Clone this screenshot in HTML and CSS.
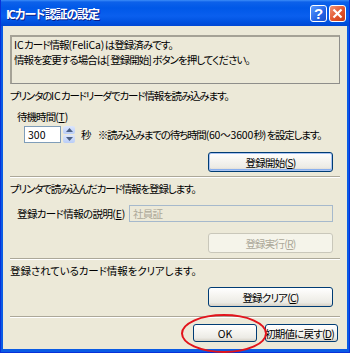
FILE: index.html
```html
<!DOCTYPE html>
<html lang="ja">
<head>
    <meta charset="UTF-8">
    <title>ICカード認証の設定</title>
    <link rel="stylesheet" href="styles.css">
</head>
<body>
    <div class="window">
        <div class="titlebar">
            <span class="title">ICカード認証の設定</span>
            <div class="caption-btns">
                <span class="cap help">?</span>
                <span class="cap close">
                    <svg width="11" height="11" viewBox="0 0 11 11"><path d="M1.5 1.5 L9.5 9.5 M9.5 1.5 L1.5 9.5" stroke="#fff" stroke-width="2.2" fill="none"/></svg>
                </span>
            </div>
        </div>

        <div class="client">
            <div class="notice">
                <span class="fit w-158"><span class="lat">IC</span>カード情報<span class="lat">(FeliCa)</span>は登録済みです。</span>
                <span class="fit w-235">情報を変更する場合は<span class="lat">[</span>登録開始<span class="lat">]</span>ボタンを押してください。</span>
            </div>

            <!-- 読み込み -->
            <p class="lead first fit w-218">プリンタの<span class="lat">IC</span>カードリーダでカード情報を読み込みます。</p>
            <p class="label fit w-51">待機時間<span class="lat">(<u>T</u>)</span></p>
            <div class="wait-row">
                <div class="field spin-field">300</div>
                <div class="spin">
                    <span class="spin-btn"><svg width="7" height="4" viewBox="0 0 7 4"><path d="M0 4 L3.5 0 L7 4 Z" fill="#4D6185"/></svg></span>
                    <span class="spin-btn"><svg width="7" height="4" viewBox="0 0 7 4"><path d="M0 0 L3.5 4 L7 0 Z" fill="#4D6185"/></svg></span>
                </div>
                <span class="unit">秒</span>
                <span class="hint fit w-223">※読み込みまでの待ち時間<span class="lat">(60～3600</span>秒<span class="lat">)</span>を設定します。</span>
            </div>
            <div class="btn-row row-start">
                <button class="btn wide is-default">登録開始(<u>S</u>)</button>
            </div>
            <hr class="sep sep-1">

            <!-- 登録 -->
            <p class="lead fit w-185">プリンタで読み込んだカード情報を登録します。</p>
            <div class="desc-row">
                <span class="fit w-108">登録カード情報の説明<span class="lat">(<u>E</u>)</span></span>
                <div class="field desc-field disabled">社員証</div>
            </div>
            <div class="btn-row row-exec">
                <button class="btn wide" disabled>登録実行(<u>R</u>)</button>
            </div>
            <hr class="sep sep-2">

            <!-- クリア -->
            <p class="lead fit w-185">登録されているカード情報をクリアします。</p>
            <div class="btn-row row-clear">
                <button class="btn wide">登録クリア(<u>C</u>)</button>
            </div>
            <hr class="sep sep-3">

            <div class="footer">
                <button class="btn ok">OK</button>
                <button class="btn reset">初期値に戻す(<u>D</u>)</button>
            </div>
        </div>

        <div class="mark"></div>
    </div>
</body>
</html>
```

FILE: styles.css
```css
body {
    margin: 0;
    padding: 0;
    background: #fff;
    font-family: "Noto Sans CJK JP", "Noto Sans", sans-serif;
    font-size: 10.5px;
    letter-spacing: -0.8px;
    font-feature-settings: "palt";
    color: #000;
}

/* lines stretched to the width measured on the dialog */
.fit {
    display: block;
    flex: none;
    white-space: nowrap;
    letter-spacing: -1.6px;
    line-height: 13px;
    text-align: justify;
    text-align-last: justify;
}

/* latin runs keep their own spacing */
.lat {
    display: inline-block;
    letter-spacing: -0.2px;
}

.w-51 { width: 51px; }
.w-108 { width: 108px; }
.w-158 { width: 158px; }
.w-185 { width: 185px; }
.w-218 { width: 218px; }
.w-223 { width: 223px; }
.w-235 { width: 235px; }

.window {
    position: relative;
    width: 350px;
    height: 353px;
    box-sizing: border-box;
    display: flex;
    flex-direction: column;
    background: #0A5BE4;
    border-left: 1px solid #0831D9;
    border-right: 1px solid #0831D9;
    border-bottom: 1px solid #0831D9;
}

.titlebar {
    height: 26px;
    flex: none;
    display: flex;
    align-items: center;
    justify-content: space-between;
    padding: 0 3px 0 5px;
    background: linear-gradient(to bottom, #3C8DF8 0, #0D61EA 2px, #0058E8 8px, #0A5FEE 16px, #0052E0 22px, #0048D4 26px);
}

.title {
    width: 92px;
    color: #fff;
    font-weight: bold;
    font-size: 12px;
    white-space: nowrap;
    letter-spacing: -2px;
    text-align: justify;
    text-align-last: justify;
    text-shadow: 1px 1px 0 #0A1E8A;
}

.caption-btns {
    display: flex;
    gap: 2px;
}

.cap {
    width: 15px;
    height: 15px;
    border: 1px solid #fff;
    border-radius: 3px;
    display: flex;
    align-items: center;
    justify-content: center;
    color: #fff;
    font-family: "Liberation Sans", sans-serif;
    font-weight: bold;
    font-size: 15px;
    letter-spacing: 0;
}

.help {
    background: linear-gradient(135deg, #5B9BFF, #2464E6 60%, #1B50C8);
}

.close {
    background: linear-gradient(135deg, #F19477, #E2542C 55%, #C63C16);
}

.client {
    flex: 1;
    margin: 0 2px 3px 2px;
    background: #ECE9D8;
    padding: 0 14px 0 7px;
    display: flex;
    flex-direction: column;
    line-height: 13px;
}

.notice {
    margin-top: 9px;
    margin-right: -7px;
    height: 46px;
    padding: 0 0 0 2px;
    border: 1px solid #8E8E8A;
    border-top: 2px solid #A5A296;
    border-left: 2px solid #A5A296;
    background: #ECE9D8;
}

.notice .fit {
    line-height: 15px;
}

.lead {
    margin: 4px 0 0;
}

.lead.first {
    margin-top: 5px;
}

.label {
    margin: 8px 0 0 7px;
}

u {
    text-decoration: underline;
}

.wait-row {
    display: flex;
    align-items: center;
    margin: 3px 0 0 14px;
}

.field {
    flex: none;
    height: 15px;
    border: 1px solid #7F9DB9;
    background: #fff;
    padding: 0 3px;
    line-height: 15px;
}

.spin-field {
    width: 29px;
    letter-spacing: 0;
}

.spin {
    flex: none;
    display: flex;
    flex-direction: column;
    margin-left: 2px;
    height: 17px;
    width: 12px;
    gap: 1px;
}

.spin-btn {
    flex: 1;
    display: flex;
    align-items: center;
    justify-content: center;
    border-radius: 2px;
    background: linear-gradient(to bottom, #DCE6FD, #B9CDF7);
}

.unit {
    margin-left: 6px;
}

.hint {
    margin-left: 7px;
}

.btn-row {
    display: flex;
    justify-content: flex-end;
}

.row-start {
    margin-top: 9px;
}

.row-exec {
    margin-top: 11px;
}

.row-clear {
    margin-top: 10px;
}

.btn {
    height: 20px;
    padding: 0;
    font-family: inherit;
    font-size: 10.5px;
    letter-spacing: -0.8px;
    font-feature-settings: "palt";
    color: #000;
    border: 1px solid #003C74;
    border-radius: 3px;
    background: linear-gradient(to bottom, #FFFFFF 0, #F6F5F1 40%, #ECEBE5 80%, #D6D0C5 100%);
    white-space: nowrap;
}

.btn.wide {
    width: 125px;
}

.btn.is-default {
    box-shadow: inset 0 0 0 1px #A9C3F2, inset 0 -1px 0 1px #8AB0EE;
}

.btn:disabled {
    color: #ACA899;
    border-color: #C9C7BA;
    background: #F5F4EA;
}

.sep {
    height: 0;
    margin: 4px -7px 0 0;
    border: none;
    border-top: 1px solid #ACA899;
    border-bottom: 1px solid #fff;
}

.sep-2 {
    margin-top: 5px;
}

.sep-3 {
    margin-top: 9px;
}

.desc-row {
    display: flex;
    align-items: center;
    justify-content: space-between;
    margin: 10px 0 0 7px;
}

.desc-field {
    width: 196px;
}

.desc-field.disabled {
    background: #ECE9D8;
    color: #ACA899;
    border-color: #A6B9CC;
}

.footer {
    display: flex;
    justify-content: flex-end;
    gap: 8px;
    margin: 6px -5px 0 0;
}

.btn.ok {
    width: 64px;
    height: 18px;
    letter-spacing: 0;
}

.btn.reset {
    width: 73px;
    height: 18px;
    overflow: visible;
    text-indent: -4px;
}

.mark {
    position: absolute;
    left: 180px;
    top: 314px;
    width: 82px;
    height: 35px;
    border: 2px solid #E2141C;
    border-radius: 50%;
}
```
